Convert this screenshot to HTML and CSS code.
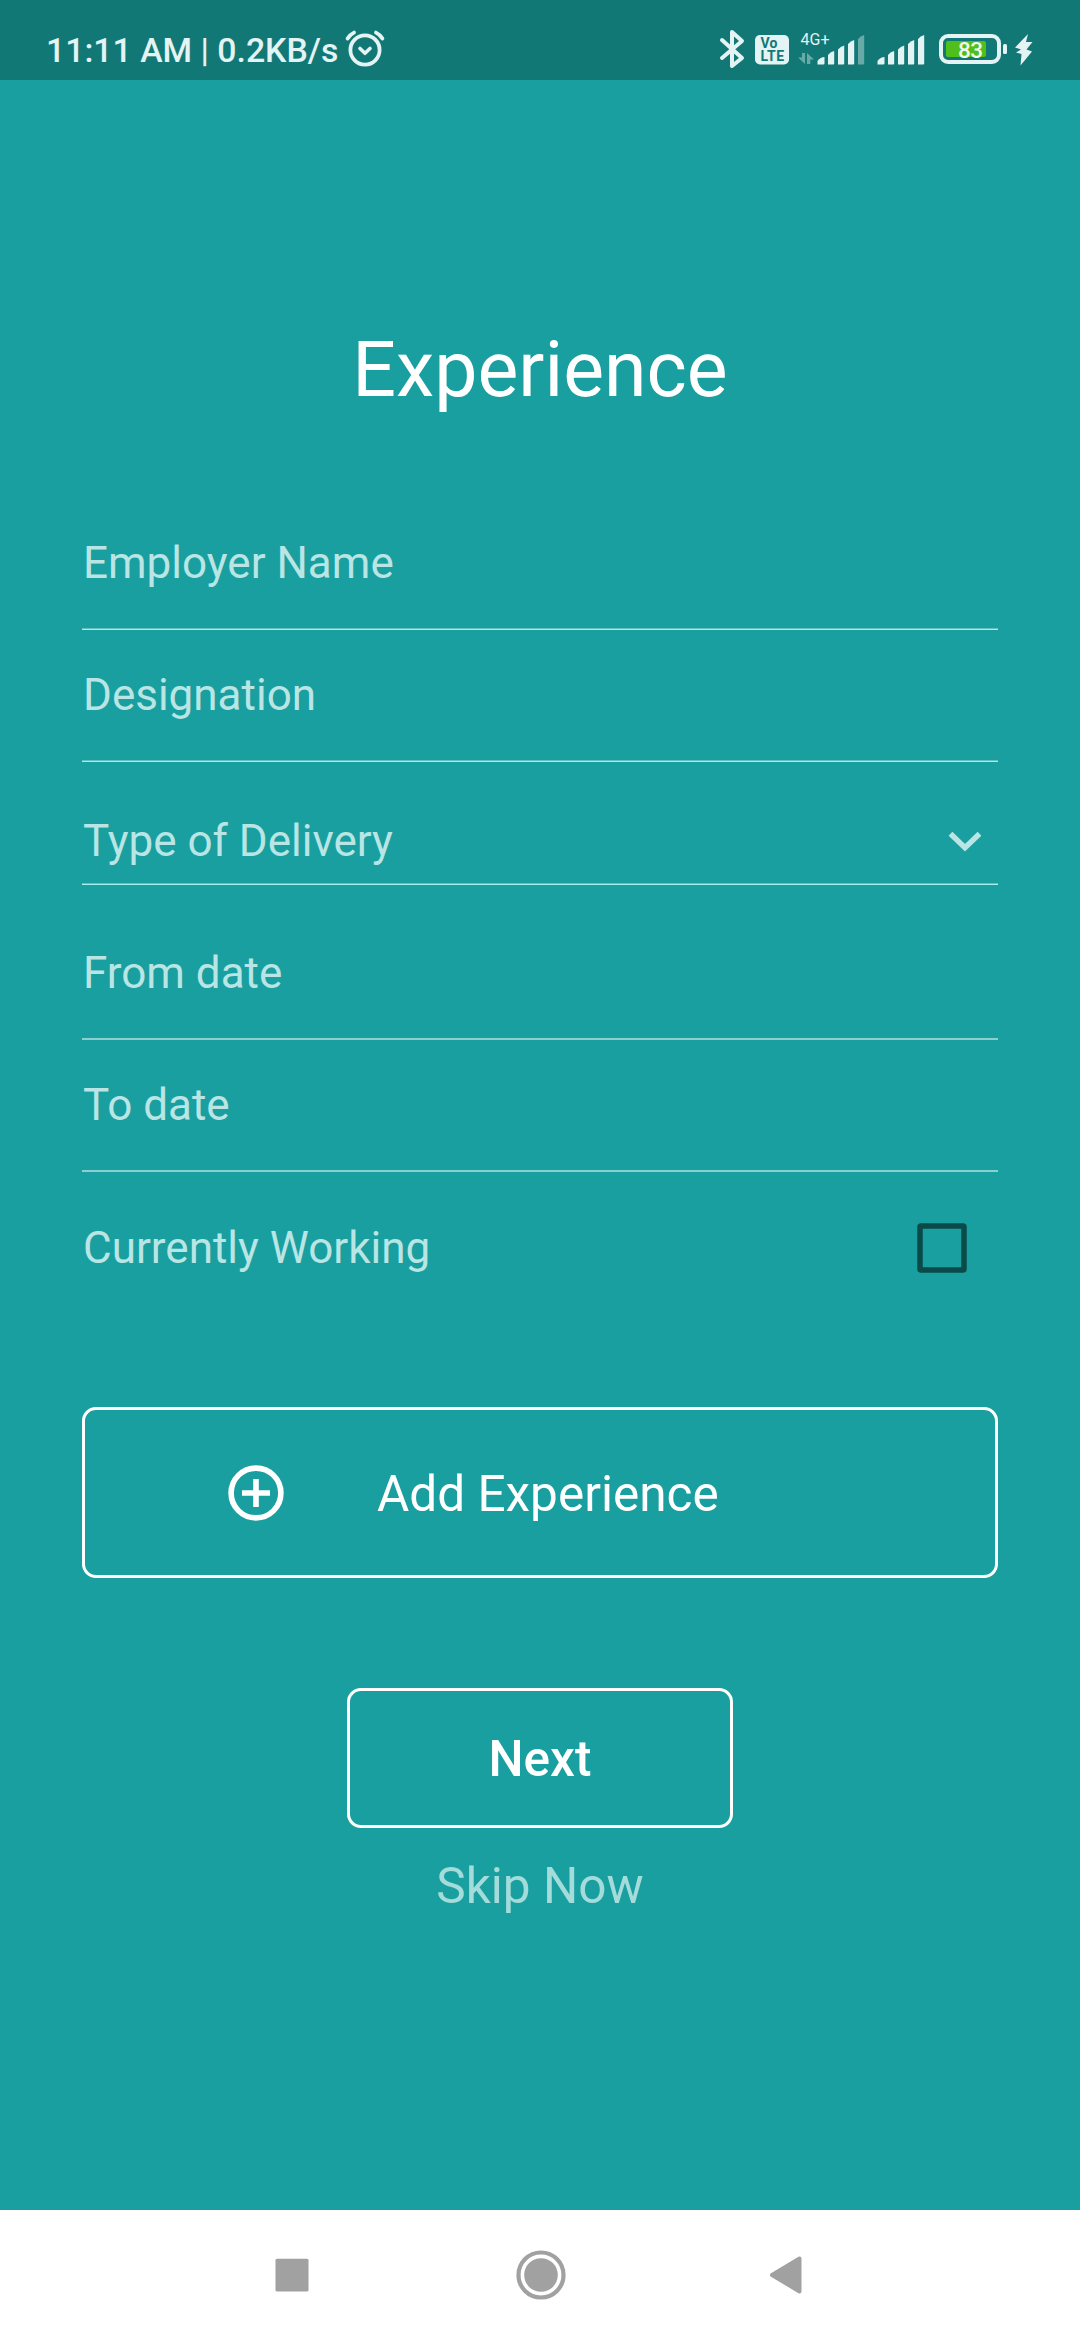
FILE: index.html
```html
<!DOCTYPE html>
<html lang="en">
<head>
<meta charset="utf-8">
<title>Experience</title>
<link rel="stylesheet" href="styles.css">
</head>
<body>
<div class="screen">
  <header class="status-bar">
    <span class="status-text">11:11 AM | 0.2KB/s</span>
    <svg class="alarm" width="42" height="42" viewBox="0 0 42 42" fill="none" stroke="#e4f3f3" stroke-linecap="round" stroke-linejoin="round">
      <circle cx="21" cy="22" r="14.6" stroke-width="3.8"/>
      <path d="M16 20.5l5 4.8 5-4.8" stroke-width="3.6"/>
      <path d="M3.600 10.500Q6 6.500 10 4.600M38.400 10.500Q36 6.500 32 4.600" stroke-width="3.8"/>
    </svg>
    <div class="status-icons">
      <svg width="28" height="42" viewBox="0 0 28 42" fill="none" stroke="#e4f3f3" stroke-width="4" stroke-linejoin="round" stroke-linecap="round">
        <path d="M4 12L24 30 14 38V4L24 13 4 30"/>
      </svg>
      <svg class="volte" width="34" height="30" viewBox="0 0 34 30">
        <rect width="34" height="29.4" rx="5" fill="#e4f3f3"/>
        <text x="5.5" y="13.2" class="volte-text" textLength="17">Vo</text>
        <text x="5.5" y="25.6" class="volte-text" textLength="23.5">LTE</text>
      </svg>
      <svg class="signal-data" width="68" height="34" viewBox="0 0 68 34">
        <text x="2.5" y="12.6" class="net-text">4G+</text>
        <path d="M4 21H7V32L0 25.500H4zM9 32V21L16 27.500H12.300V32z" fill="#67aaa8"/>
        <g fill="#e4f3f3">
          <path d="M19.500 32.500V29q3-4 7-4v6.500q0 1-1 1z"/>
          <path d="M30 32.500V23q2.500-3.500 6.200-4v12.500q0 1-1 1z"/>
          <path d="M40 32.500V17.500q2.500-3.200 6.200-4v18q0 1-1 1z"/>
          <path d="M50 32.500V12q2.500-3.200 6.200-4v23.500q0 1-1 1z"/>
        </g>
        <path d="M60 32.500V7q2.500-3.200 6.200-4v28.500q0 1-1 1z" fill="#67aaa8"/>
      </svg>
      <svg class="signal" width="48" height="34" viewBox="19 0 48 34" fill="#e4f3f3">
        <path d="M19.500 32.500V29q3-4 7-4v6.500q0 1-1 1z"/>
        <path d="M30 32.500V23q2.500-3.500 6.200-4v12.500q0 1-1 1z"/>
        <path d="M40 32.500V17.500q2.500-3.200 6.200-4v18q0 1-1 1z"/>
        <path d="M50 32.500V12q2.500-3.200 6.200-4v23.500q0 1-1 1z"/>
        <path d="M60 32.500V7q2.500-3.200 6.200-4v28.500q0 1-1 1z"/>
      </svg>
      <svg class="battery" width="68" height="30" viewBox="0 0 68 30">
        <rect x="2" y="2" width="58" height="26" rx="7" fill="none" stroke="#e4f3f3" stroke-width="4"/>
        <rect x="7" y="7" width="40" height="16" rx="2" fill="#4fbf1c"/>
        <rect x="64" y="10" width="4" height="10" rx="1.500" fill="#e4f3f3"/>
        <text x="19" y="24" class="battery-text" textLength="25">83</text>
      </svg>
      <svg class="bolt" width="18" height="32" viewBox="0 0 18 32" fill="#e4f3f3">
        <path d="M13 0L0 13.500 6 15.500 1 18.500 6.500 20 5.500 31.500 17 17.500 11.500 15.500 17.500 8 11 8z"/>
      </svg>
    </div>
  </header>

  <main class="form">
    <h1 class="title">Experience</h1>
    <div class="field">Employer Name</div>
    <div class="field">Designation</div>
    <div class="field field-select">Type of Delivery
      <svg width="34" height="22" viewBox="0 0 34 22" fill="none" stroke="#b9e5e4" stroke-width="5.400"><path d="M2.500 2.700L17 16.800 31.500 2.700"/></svg>
    </div>
    <div class="field field-date field-from">From date</div>
    <div class="field field-date">To date</div>
    <label class="check-row">Currently Working
      <svg width="50" height="50" viewBox="0 0 50 50"><rect x="3" y="3" width="44" height="44" rx="1" fill="none" stroke="#0a4b4a" stroke-width="5.500"/></svg>
    </label>

    <button class="btn btn-add">
      <svg width="56" height="56" viewBox="0 0 56 56" fill="none" stroke="#fff" stroke-width="5.600"><circle cx="28" cy="28" r="24.900"/><path d="M28 14v28M14 28h28"/></svg>
      <span>Add Experience</span>
    </button>
    <button class="btn btn-next">Next</button>
    <a class="skip">Skip Now</a>
  </main>

  <nav class="nav-bar">
    <svg width="34" height="34" viewBox="0 0 34 34"><rect x=".5" y=".8" width="33" height="32.600" rx="1.500" fill="#a1a1a1"/></svg>
    <svg class="home" width="50" height="50" viewBox="0 0 50 50"><circle cx="25" cy="25" r="22.500" fill="none" stroke="#a1a1a1" stroke-width="4.200"/><circle cx="25" cy="25" r="16.800" fill="#a1a1a1"/></svg>
    <svg width="34" height="38" viewBox="0 0 34 38"><path d="M3 19L30.500 2.500V35.500z" fill="#a1a1a1" stroke="#a1a1a1" stroke-width="4" stroke-linejoin="round"/></svg>
  </nav>
</div>
</body>
</html>
```
FILE: styles.css
```css
* { box-sizing: border-box; }

body {
  margin: 0;
  font-family: Roboto, "Noto Sans", sans-serif;
  background: #1a9fa0;
}

svg { display: block; flex: none; overflow: visible; }

.screen {
  width: 1080px;
  height: 2340px;
  display: flex;
  flex-direction: column;
  overflow: hidden;
}

/* Status bar */
.status-bar {
  height: 80px;
  flex: none;
  display: flex;
  align-items: flex-start;
  padding: 0 47px 0 46px;
  background: #127876;
  color: #e4f3f3;
}

.status-text {
  font-size: 33.800px;
  font-weight: 500;
  line-height: 101px;
  white-space: pre;
}

.alarm { margin: 28px 0 0 6px; }

.status-icons {
  margin-left: auto;
  display: flex;
  align-items: flex-start;
}

.status-icons svg { margin-top: 28px; }
.status-icons .volte { margin: 35px 0 0 9px; }
.status-icons .signal-data { margin: 32px 0 0 9px; }
.status-icons .signal { margin: 32px 0 0 11px; }
.status-icons .battery { margin: 34px 0 0 14px; }
.status-icons .bolt { margin: 34px 0 0 8px; }

.volte-text {
  font: 700 14px Roboto, sans-serif;
  fill: #127876;
}

.net-text { font: 400 16px Roboto, sans-serif; fill: #e4f3f3; }
.battery-text { font: 500 22.500px Roboto, sans-serif; fill: #f0f9ec; }

/* Form */
.form {
  flex: 1;
  display: flex;
  flex-direction: column;
  padding: 231px 82px 0;
  color: #b9e5e4;
  font-size: 44px;
}

.title {
  margin: 0 0 68px;
  font-size: 77px;
  font-weight: 400;
  line-height: 119px;
  text-align: center;
  color: #fff;
}

.field {
  height: 132px;
  padding-left: 1px;
  line-height: 130px;
  border-bottom: 1px solid #a5ecea;
  box-shadow: inset 0 -1px #66bfbe;
}

.field-select {
  height: 123px;
  padding: 37px 16px 0 1px;
  line-height: 84px;
  display: flex;
  justify-content: space-between;
}

.field-select svg { margin-top: 32px; }

.field-date {
  border-bottom: 2px solid #8bcfce;
  box-shadow: none;
}

.field-from { height: 155px; padding-top: 23px; }

.check-row {
  height: 152px;
  padding: 0 31px 0 1px;
  display: flex;
  align-items: center;
  justify-content: space-between;
}

.btn {
  margin: 0;
  padding: 0;
  font: 400 49.500px Roboto, "Noto Sans", sans-serif;
  color: #fff;
  background: none;
  border: 3px solid #fff;
  border-radius: 14px;
}

.btn-add {
  height: 171px;
  margin-top: 83px;
  padding: 2px 0 0 143px;
  display: flex;
  align-items: center;
  gap: 93px;
}

.btn-add svg { margin-top: -2px; }

.btn-next {
  width: 386px;
  height: 140px;
  margin: 110px auto 0;
  padding-top: 2px;
  font-weight: 500;
}

.skip {
  margin-top: 26px;
  font-size: 49.500px;
  line-height: 64px;
  text-align: center;
  color: #a3dcda;
}

/* Navigation bar */
.nav-bar {
  height: 130px;
  flex: none;
  display: flex;
  align-items: center;
  justify-content: space-between;
  padding: 0 277px 0 275px;
  background: #fff;
}

.home { margin-left: 3px; }
```
